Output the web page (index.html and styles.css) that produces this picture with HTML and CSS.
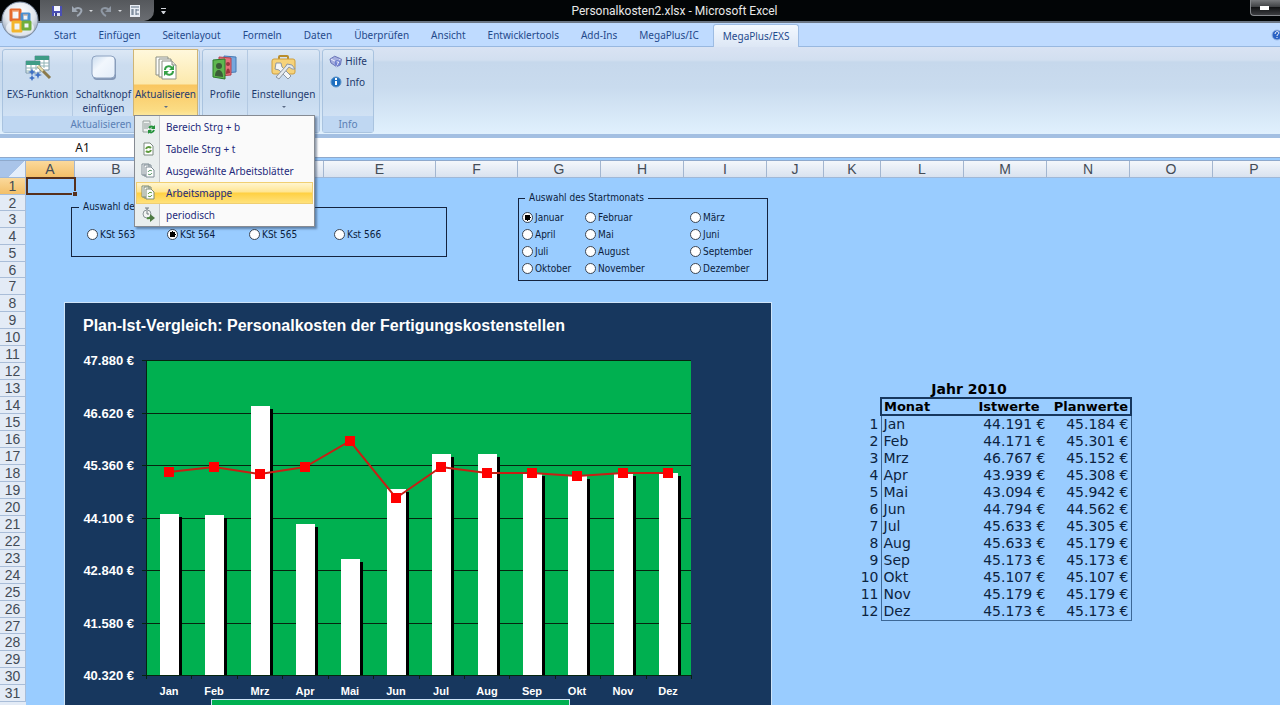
FILE: index.html
```
<!DOCTYPE html>
<html lang="de">
<head>
    <meta charset="UTF-8">
    <meta name="viewport" content="width=device-width, initial-scale=1.0">
    <title>Personalkosten2.xlsx - Microsoft Excel</title>
    <link rel="stylesheet" href="styles.css">
</head>
<body>
    <header class="title-bar">
        <button class="office-button" aria-label="Office">
            <svg width="40" height="40" viewBox="0 0 40 40">
                <defs>
                    <radialGradient id="orb" cx="50%" cy="30%" r="70%">
                        <stop offset="0" stop-color="#ffffff"/>
                        <stop offset="0.6" stop-color="#dfe5ec"/>
                        <stop offset="1" stop-color="#8e9cb0"/>
                    </radialGradient>
                </defs>
                <circle cx="20" cy="20" r="18" fill="url(#orb)" stroke="#7d8da3"/>
                <ellipse cx="20" cy="28" rx="14" ry="8" fill="#f6fafd" opacity="0.7"/>
                <g fill="none" stroke-width="3" stroke-linejoin="round">
                    <rect x="11" y="10" width="9" height="10" stroke="#e5692c"/>
                    <rect x="22" y="14" width="7" height="7" stroke="#4a8fd0"/>
                    <rect x="13" y="22" width="8" height="9" stroke="#f3b52d"/>
                    <rect x="23" y="22" width="7" height="7" stroke="#6fae3c"/>
                </g>
                <path d="M12 11h7M23 15h5" stroke="#f6b98f" stroke-width="1"/>
            </svg>
        </button>
        <div class="quick-access">
            <button aria-label="Speichern">
                <svg width="12" height="12" viewBox="0 0 12 12"><path d="M1 1h10v10H1z" fill="#4a4fb4"/><path d="M3 1h6v5H3z" fill="#f4f5ff"/><path d="M3 8h6v3H3z" fill="#dfe3f5"/><path d="M4 8h2v3H4z" fill="#3b3f8f"/></svg>
            </button>
            <button aria-label="Rückgängig">
                <svg width="12" height="12" viewBox="0 0 12 12"><path d="M3 5c4-4 9-1 7 2-1 2-2 3-4 4" fill="none" stroke="#9fa8b4" stroke-width="2"/><path d="M1 1v6h6z" fill="#9fa8b4"/></svg>
            </button>
            <span class="arrow"></span>
            <button aria-label="Wiederholen">
                <svg width="12" height="12" viewBox="0 0 12 12"><path d="M9 5C5 1 0 4 2 7c1 2 2 3 4 4" fill="none" stroke="#8f98a4" stroke-width="2"/><path d="M11 1v6H5z" fill="#8f98a4"/></svg>
            </button>
            <span class="arrow"></span>
            <button aria-label="Formular">
                <svg width="12" height="12" viewBox="0 0 12 12"><path d="M1 0h10v12H1z" fill="#e8edf4"/><path d="M2 2h8M3 4v6M3 5h2M3 7h2M3 9h2M7 4v6M7 5h3M7 9h3" stroke="#5f7184" fill="none"/></svg>
            </button>
        </div>
        <svg class="customize" width="7" height="7" viewBox="0 0 7 7"><path d="M1 0h5v1H1zM1 3h5L4 6H3z" fill="#cfd3d8"/></svg>
        <h1>Personalkosten2.xlsx - Microsoft Excel</h1>
        <button class="minimize" aria-label="Minimieren"></button>
    </header>

    <nav class="tabs">
        <a href="#">Start</a>
        <a href="#">Einfügen</a>
        <a href="#">Seitenlayout</a>
        <a href="#">Formeln</a>
        <a href="#">Daten</a>
        <a href="#">Überprüfen</a>
        <a href="#">Ansicht</a>
        <a href="#">Entwicklertools</a>
        <a href="#">Add-Ins</a>
        <a href="#">MegaPlus/IC</a>
        <a href="#" class="active">MegaPlus/EXS</a>
        <button class="help" aria-label="Hilfe">
            <svg width="12" height="12" viewBox="0 0 12 12"><circle cx="6" cy="6" r="5" fill="#2b62c4" stroke="#9db9e6"/><path d="M4 5c0-3 4-3 4-1 0 1-2 1-2 3M6 8v1" stroke="#fff" fill="none"/></svg>
        </button>
    </nav>

    <section class="ribbon">
        <div class="group group-update">
            <div class="group-body">
                <button class="big">
                    <svg width="28" height="28" viewBox="0 0 28 28">
                        <path d="M11 2h14v14H11z" fill="#fff" stroke="#7b98a8"/><path d="M11 2h14v4H11z" fill="#3f9c86"/>
                        <path d="M2 7h14v12H2z" fill="#fff" stroke="#7b98a8"/><path d="M2 7h14v4H2z" fill="#3f9c86"/>
                        <path d="M2 14h14M2 17h9M7 11v8M12 11v5M16 9h9M16 12h9M20 6v8" stroke="#8fb3b5" fill="none"/>
                        <path d="M14 12l12 12" stroke="#8b7a4c" stroke-width="3"/><path d="M14 12l5 5" stroke="#e8e0b0" stroke-width="2"/>
                        <path d="M8 14l1 3 3 1-3 1-1 3-1-3-3-1 3-1zM14 17l1 3 3 1-3 1-1 3-1-3-3-1 3-1zM8 21l1 2 2 1-2 1-1 2-1-2-2-1 2-1z" fill="#3e6fc4"/>
                    </svg>
                    <span>EXS-Funktion</span>
                </button>
                <button class="big">
                    <svg width="28" height="28" viewBox="0 0 28 28">
                        <defs><linearGradient id="knob" x2="1" y2="1"><stop offset="0" stop-color="#c9dbef"/><stop offset="0.4" stop-color="#f2f7fd"/><stop offset="1" stop-color="#e3edf9"/></linearGradient></defs>
                        <rect x="3" y="3" width="23" height="23" rx="4" fill="#8296b5"/>
                        <rect x="2" y="2" width="23" height="22" rx="4" fill="url(#knob)" stroke="#8ea3c1"/>
                    </svg>
                    <span>Schaltknopf einfügen</span>
                </button>
                <button class="big open" aria-haspopup="true" aria-expanded="true">
                    <svg width="28" height="28" viewBox="0 0 28 28">
                        <path d="M4 3h12v18H4z" fill="#fdfdfb" stroke="#8b8f84"/>
                        <path d="M7 5h12v18H7z" fill="#fdfdfb" stroke="#8b8f84"/>
                        <path d="M10 7h10l4 4v14H10z" fill="#fff" stroke="#8b8f84"/><path d="M20 7v4h4" fill="#e6e6e0" stroke="#8b8f84"/>
                        <path d="M13 16c0-4 5-5 7-2M21 17c0 4-5 5-7 2" fill="none" stroke="#35a046" stroke-width="2"/>
                        <path d="M22 11v5h-5zM12 22v-5h5z" fill="#35a046"/>
                    </svg>
                    <span>Aktualisieren</span>
                    <i class="caret"></i>
                </button>
            </div>
            <div class="group-label">Aktualisieren</div>
            <ul class="menu">
                <li><button>
                    <svg width="16" height="16" viewBox="0 0 16 16"><path d="M3 2h7v11H3z" fill="#eef1f0" stroke="#95a09c"/><path d="M4 5h5M4 7h5M4 9h4" stroke="#8d9a98"/><path d="M9 9c1-2 4-2 5 0M14 11c-1 3-4 3-5 1" fill="none" stroke="#23923b" stroke-width="2"/><path d="M15 6v4h-4zM8 15v-4h4z" fill="#23923b"/></svg>
                    <span>Bereich Strg + b</span></button></li>
                <li><button>
                    <svg width="16" height="16" viewBox="0 0 16 16"><path d="M4 2h6l3 3v9H4z" fill="#fff" stroke="#7c8b80"/><path d="M6 8c1-3 4-2 5-1M11 9c-1 3-4 2-5 1" fill="none" stroke="#5d9a3c" stroke-width="2"/></svg>
                    <span>Tabelle Strg + t</span></button></li>
                <li><button>
                    <svg width="16" height="16" viewBox="0 0 16 16"><path d="M2 1h7v11H2zM4 2h7v11H4z" fill="#fff" stroke="#7e8c94"/><path d="M6 4h5l3 3v7H6z" fill="#fff" stroke="#7e8c94"/><path d="M8 9c1-2 3-2 4-1M12 10c-1 2-3 2-4 1" fill="none" stroke="#5d9a6c" stroke-width="1"/></svg>
                    <span>Ausgewählte Arbeitsblätter</span></button></li>
                <li><button class="selected">
                    <svg width="16" height="16" viewBox="0 0 16 16"><path d="M2 1h7v11H2zM4 2h7v11H4z" fill="#fff" stroke="#7e8c74"/><path d="M6 4h5l3 3v7H6z" fill="#fff" stroke="#7e8c74"/><path d="M8 9c1-2 3-2 4-1M12 10c-1 2-3 2-4 1" fill="none" stroke="#5d9a3c" stroke-width="1"/></svg>
                    <span>Arbeitsmappe</span></button></li>
                <li><button>
                    <svg width="16" height="16" viewBox="0 0 16 16"><circle cx="7" cy="7" r="4" fill="#f2f4f3" stroke="#8b9598"/><path d="M7 4v3h2M5 1h4M7 1v2" stroke="#727d80" fill="none"/><path d="M7 11c2 1 3 0 4-1" fill="none" stroke="#4c8a3c" stroke-width="2"/><path d="M10 7l5 4-5 4z" fill="#4e7a43"/></svg>
                    <span>periodisch</span></button></li>
            </ul>
        </div>
        <div class="group group-profile">
            <div class="group-body">
                <button class="big">
                    <svg width="28" height="28" viewBox="0 0 28 28">
                        <path d="M13 2l12 1v15l-12 1z" fill="#76a7dd" stroke="#4678b4"/>
                        <path d="M8 3l12 1v17l-12 1z" fill="#e8707a" stroke="#b5434f"/>
                        <path d="M2 6l12-1v20l-12-2z" fill="#5fb84f" stroke="#2d7a2d"/>
                        <circle cx="8" cy="12" r="3" fill="#3c5c38"/><path d="M4 22c0-8 8-8 8 1z" fill="#3c5c38"/>
                        <circle cx="17" cy="10" r="2" fill="#9c3640"/><path d="M15 20c0-7 4-7 4-1z" fill="#9c3640"/>
                    </svg>
                    <span>Profile</span>
                </button>
                <button class="big">
                    <svg width="28" height="28" viewBox="0 0 28 28">
                        <path d="M9 6V3q0-1 1-1h7q1 0 1 1v3" fill="none" stroke="#b98d2d" stroke-width="2"/>
                        <rect x="2" y="5" width="23" height="15" rx="2" fill="#f6d27a" stroke="#cf9f3c"/>
                        <path d="M6 9l5 0 1 4 9 9-3 3-9-9-4-1z" fill="#f4f6f8" stroke="#8d97a3"/>
                        <path d="M17 10l5 1 3 4-3 0-3-2-10 12-3-2 10-11z" fill="#e4e9ee" stroke="#8d97a3"/>
                    </svg>
                    <span>Einstellungen</span>
                    <i class="caret"></i>
                </button>
            </div>
            <div class="group-label"></div>
        </div>
        <div class="group group-info">
            <div class="group-body small-buttons">
                <button>
                    <svg width="14" height="14" viewBox="0 0 14 14"><path d="M1 5l5-3 7 3-1 6-4 2-6-4z" fill="#a5aede" stroke="#6670b4"/><path d="M2 5l6 3 4-3M8 8v5" stroke="#eef0ff" fill="none"/><circle cx="9" cy="9" r="3" fill="#6e7fd0"/><path d="M8 8h2v1L9 10v1" stroke="#fff" fill="none"/></svg>
                    Hilfe
                </button>
                <button>
                    <svg width="14" height="14" viewBox="0 0 14 14"><circle cx="7" cy="7" r="5" fill="#1d6fc0" stroke="#5c93c9"/><path d="M7 3v2" stroke="#fff" stroke-width="2"/><path d="M7 6v4" stroke="#fff" stroke-width="2"/></svg>
                    Info
                </button>
            </div>
            <div class="group-label">Info</div>
        </div>
    </section>

    <div class="formula-bar">
        <input class="name-box" value="A1" aria-label="Namenfeld">
        <input class="formula" value="" aria-label="Bearbeitungsleiste">
    </div>

    <div class="columns" id="columns"></div>

    <main class="sheet">
        <div class="rows" id="rows"></div>
        <div class="cells">
            <div class="active-cell"></div>
            <div class="left">
                <div class="boxes">
                    <fieldset class="cost-centers">
                        <legend>Auswahl der Kostenstelle</legend>
                        <label><input type="radio" name="kst">KSt 563</label>
                        <label><input type="radio" name="kst" checked>KSt 564</label>
                        <label><input type="radio" name="kst">KSt 565</label>
                        <label><input type="radio" name="kst">Kst 566</label>
                    </fieldset>
                    <fieldset class="months">
                        <legend>Auswahl des Startmonats</legend>
                        <label><input type="radio" name="monat" checked>Januar</label>
                        <label><input type="radio" name="monat">Februar</label>
                        <label><input type="radio" name="monat">März</label>
                        <label><input type="radio" name="monat">April</label>
                        <label><input type="radio" name="monat">Mai</label>
                        <label><input type="radio" name="monat">Juni</label>
                        <label><input type="radio" name="monat">Juli</label>
                        <label><input type="radio" name="monat">August</label>
                        <label><input type="radio" name="monat">September</label>
                        <label><input type="radio" name="monat">Oktober</label>
                        <label><input type="radio" name="monat">November</label>
                        <label><input type="radio" name="monat">Dezember</label>
                    </fieldset>
                </div>
                <div class="chart">
                    <h2>Plan-Ist-Vergleich: Personalkosten der Fertigungskostenstellen</h2>
                    <svg id="chart" width="700" height="364" viewBox="0 0 700 364"></svg>
                    <div class="legend"></div>
                </div>
            </div>
            <table class="values">
                <caption>Jahr 2010</caption>
                <thead>
                    <tr><td></td><th>Monat</th><th>Istwerte</th><th>Planwerte</th></tr>
                </thead>
                <tbody id="values"></tbody>
            </table>
        </div>
    </main>

    <script src="script.js"></script>
</body>
</html>
```
FILE: styles.css
```
body {
    font-family: "Noto Sans", sans-serif;
    font-size: 10px;
    margin: 0;
    height: 100vh;
    overflow: hidden;
    display: flex;
    flex-direction: column;
    color: #1e3a6e;
    background: #99ccff;
}

button {
    font: inherit;
    color: inherit;
    background: none;
    border: none;
    padding: 0;
}

svg {
    display: block;
}

/* Title bar */
.title-bar {
    position: relative;
    display: flex;
    flex: none;
    height: 21px;
    background: #020506;
    border-bottom: 2px solid #6b7684;
}

.office-button {
    position: absolute;
    left: 0;
    top: 0;
    z-index: 2;
}

.quick-access {
    display: flex;
    align-items: center;
    gap: 8px;
    box-sizing: border-box;
    width: 114px;
    margin-left: 40px;
    padding-left: 11px;
    background: linear-gradient(#55585c, #6a6d72);
    border-radius: 0 0 10px 0;
}

.quick-access .arrow {
    border: 2px solid transparent;
    border-top-color: #d5d8dc;
    margin: 2px -1px 0 -2px;
}

.customize {
    margin: 8px 0 0 6px;
}

.title-bar h1 {
    flex: 1;
    margin: 0;
    padding-right: 68px;
    font: 12px/22px Roboto, sans-serif;
    text-align: center;
    color: #e8e8e8;
}

.minimize {
    position: relative;
    width: 30px;
    height: 16px;
    border: 1px solid #85888c;
    border-top: none;
    border-right: none;
    border-radius: 0 0 0 4px;
    background: linear-gradient(#77797c, #3a3c3f 50%, #121315 50%, #3c3e41);
}

.minimize::after {
    content: "";
    position: absolute;
    left: 9px;
    top: 6px;
    width: 9px;
    height: 4px;
    background: #fff;
}

/* Ribbon tabs */
.tabs {
    display: flex;
    flex: none;
    height: 23px;
    padding-left: 43px;
    background: #bfdbff;
    border-bottom: 1px solid #98b8e0;
}

.tabs a {
    padding: 0 11px;
    line-height: 25px;
    color: #1f4a8c;
    text-decoration: none;
}

.tabs a.active {
    margin: 1px 0 -1px 3px;
    padding: 0 9px;
    line-height: 23px;
    background: linear-gradient(#f2f8ff, #dde7f5);
    border: 1px solid #9dbce3;
    border-bottom: none;
    border-radius: 3px 3px 0 0;
    box-sizing: border-box;
}

.help {
    margin-left: auto;
    margin-right: -3px;
}

/* Ribbon */
.ribbon {
    display: flex;
    flex: none;
    gap: 2px;
    box-sizing: border-box;
    height: 91px;
    padding: 2px 0 4px 2px;
    background: linear-gradient(#d9e3f3, #d2dff0 13px, #c6d8ec 15px, #c9dbee 40px, #e0f0fd 86px);
    border-bottom: 4px solid #a3bfe2;
}

.group {
    position: relative;
    display: flex;
    flex-direction: column;
    box-sizing: border-box;
    height: 84px;
    border: 1px solid #a9c3df;
    border-radius: 3px;
    background: linear-gradient(#dce8f6, #cbdcef 15px, #c8dbef 50px, #d8e8f9);
}

.group-update {
    width: 198px;
}

.group-profile {
    width: 118px;
}

.group-info {
    width: 52px;
}

.group-body {
    display: flex;
    flex: 1;
}

.group-label {
    flex: none;
    height: 16px;
    line-height: 17px;
    text-align: center;
    color: #5a7fb5;
    background: #bfd7f2;
}

.big {
    display: flex;
    flex-direction: column;
    align-items: center;
    box-sizing: border-box;
    padding-top: 4px;
    line-height: 14px;
}

.big span {
    margin-top: 5px;
}

.group-update .big:nth-child(1) {
    width: 70px;
    border-right: 1px solid #b3c9e2;
}

.group-update .big:nth-child(2) {
    width: 61px;
}

.group-update .big.open {
    width: 63px;
    background: linear-gradient(#fff8dc, #fce9ac 34px, #f9c660 35px, #fbdc84 60px, #fdeaa0);
    outline: 1px solid #cfb576;
}

.group-profile .big:nth-child(1) {
    width: 45px;
    border-right: 1px solid #b3c9e2;
}

.group-profile .big:nth-child(2) {
    flex: 1;
}

.caret {
    margin-top: 5px;
    border: 2px solid transparent;
    border-top-color: #5a6b85;
}

.small-buttons {
    flex-direction: column;
    padding: 0 6px;
}

.small-buttons button {
    display: flex;
    align-items: center;
    gap: 3px;
    height: 21px;
}

/* Drop-down menu */
.menu {
    position: absolute;
    left: 131px;
    top: 65px;
    z-index: 5;
    box-sizing: border-box;
    width: 181px;
    margin: 0;
    padding: 0 1px;
    list-style: none;
    background: linear-gradient(90deg, #e9eeee 24px, #c5c8cc 24px, #c5c8cc 25px, #fafafa 25px);
    border: 1px solid #868b93;
    box-shadow: 2px 2px 2px rgba(40, 60, 90, 0.5);
}

.menu button {
    display: flex;
    align-items: center;
    gap: 10px;
    box-sizing: border-box;
    width: 100%;
    height: 22px;
    padding-left: 3px;
    border: 1px solid transparent;
    white-space: nowrap;
    color: #1e2a7a;
}

.menu button.selected {
    background: linear-gradient(#fff5cf, #ffe591 45%, #ffd042 50%, #ffe27c);
    border-color: #f0cf72;
}

/* Formula bar */
.formula-bar {
    display: flex;
    flex: none;
    height: 19px;
    background: #fff;
    border-bottom: 1px solid #8fa9cc;
}

.formula-bar input {
    border: none;
    padding: 0;
    outline: none;
    background: none;
    font: 12px "Noto Sans", sans-serif;
    color: #111;
}

.name-box {
    width: 165px;
    text-align: center;
}

.formula {
    flex: 1;
}

/* Column and row headings */
.columns {
    display: grid;
    grid-template-columns: 26px 49px repeat(3, 83px) 112px 82px repeat(3, 83px) 57px 57px repeat(3, 83px) 83px 83px;
    flex: none;
    height: 16px;
    margin-top: 2px;
    overflow: hidden;
    font: 14px/16px "Liberation Sans", sans-serif;
    text-align: center;
    color: #444c56;
    background: linear-gradient(#f4f7fb, #d9e2ef);
    border-top: 1px solid #8fa9cc;
    border-bottom: 1px solid #9fb8d8;
}

.columns div {
    border-right: 1px solid #a3b6d0;
}

.columns .corner {
    background: linear-gradient(135deg, #a9c4e9 60%, #e4eefb 60%);
}

.columns .current,
.rows .current {
    background: linear-gradient(#fbd99b, #f3bf68);
}

.sheet {
    display: flex;
    flex: 1;
    min-height: 0;
}

.rows {
    display: grid;
    grid-template-rows: 17px 16px repeat(3, 17px) 16px repeat(20, 17px) 16px repeat(4, 17px);
    align-content: start;
    flex: none;
    width: 26px;
    font: 14px/17px "Liberation Sans", sans-serif;
    text-align: center;
    color: #444c56;
    background: #e3ebf6;
}

.rows div {
    box-sizing: border-box;
    border-bottom: 1px solid #a9bdd8;
    border-right: 1px solid #a9bdd8;
}

.cells {
    position: relative;
    display: flex;
    align-items: flex-start;
    flex: 1;
}

.active-cell {
    position: absolute;
    left: 0;
    top: -1px;
    width: 46px;
    height: 14px;
    border: 2px solid #57301c;
}

.active-cell::after {
    content: "";
    position: absolute;
    right: -3px;
    bottom: -3px;
    width: 4px;
    height: 4px;
    background: #57301c;
    outline: 1px solid #99ccff;
}

.left {
    width: 708px;
    margin-left: 38px;
}

/* Option boxes */
.boxes {
    display: flex;
    justify-content: space-between;
    height: 124px;
    padding: 0 4px 0 7px;
    font: 10px "DejaVu Sans Condensed", "DejaVu Sans", sans-serif;
    color: #0c1c3c;
}

fieldset {
    display: grid;
    align-content: start;
    box-sizing: border-box;
    margin: 0;
    border: 1px solid #14233f;
}

legend {
    padding: 0 4px;
    line-height: 14px;
}

label {
    display: flex;
    align-items: center;
    gap: 2px;
    height: 17px;
}

input[type="radio"] {
    appearance: none;
    box-sizing: border-box;
    width: 11px;
    height: 11px;
    margin: 0;
    border: 1px solid #3c4654;
    border-radius: 50%;
    background: #fff;
}

input[type="radio"]:checked {
    background: radial-gradient(circle, #000 3px, #fff 3px);
}

.cost-centers {
    grid-template-columns: 80px 82px 85px 80px;
    width: 376px;
    height: 57px;
    margin-top: 22px;
    padding: 12px 0 0 15px;
}

.cost-centers legend {
    margin-left: -8px;
}

.months {
    grid-template-columns: 63px 105px 70px;
    width: 250px;
    height: 90px;
    margin-top: 13px;
    padding: 4px 0 0 3px;
}

.months legend {
    margin-left: 3px;
}

/* Chart */
.chart {
    box-sizing: border-box;
    border: 1px solid #cfe4f8;
    border-bottom: none;
    background: #17375e;
    font-family: "Liberation Sans", sans-serif;
    font-weight: bold;
    color: #fff;
}

.chart h2 {
    margin: 0;
    padding: 14px 0 0 18px;
    font-size: 16px;
    line-height: 18px;
}

.chart text {
    fill: #fff;
}

.chart .axis-y {
    font-size: 13px;
    text-anchor: end;
}

.chart .axis-x {
    font-size: 11px;
    text-anchor: middle;
}

.legend {
    width: 357px;
    height: 24px;
    margin-left: 146px;
    background: #00b050;
    border: 1px solid #cfe4f8;
}

/* Data table */
.values {
    margin: 203px 0 0 84px;
    border-collapse: collapse;
    font: 14px/17px "DejaVu Sans", sans-serif;
    color: #0c2340;
}

.values caption {
    padding-right: 50px;
    font-weight: bold;
    line-height: 16px;
    color: #000;
}

.values th,
.values td {
    padding: 0 2px;
    text-align: right;
}

.values th {
    font-size: 13px;
    line-height: 15px;
    color: #000;
    border: solid #17375e;
    border-width: 2px 0;
}

.values th:nth-child(2) {
    text-align: left;
    border-left-width: 2px;
}

.values th:nth-child(3) {
    padding-right: 8px;
}

.values th:last-child {
    border-right-width: 2px;
}

.values tbody td {
    height: 17px;
}

.values td:first-child {
    width: 20px;
}

.values td:nth-child(2) {
    width: 79px;
    text-align: left;
    border-left: 1px solid #3c6796;
}

.values td:nth-child(3) {
    width: 79px;
}

.values td:nth-child(4) {
    width: 79px;
    border-right: 1px solid #3c6796;
}

.values tr:last-child td:not(:first-child) {
    border-bottom: 1px solid #3c6796;
}

.values thead td {
    border: none;
    line-height: 15px;
}
```
FILE: script.js
```
const data = [
    ["Jan", 44191, 45184],
    ["Feb", 44171, 45301],
    ["Mrz", 46767, 45152],
    ["Apr", 43939, 45308],
    ["Mai", 43094, 45942],
    ["Jun", 44794, 44562],
    ["Jul", 45633, 45305],
    ["Aug", 45633, 45179],
    ["Sep", 45173, 45173],
    ["Okt", 45107, 45107],
    ["Nov", 45179, 45179],
    ["Dez", 45173, 45173]
];

function euro(n) {
    return String(n).replace(/(\d{3})$/, ".$1") + " €";
}

// Headings
let html = '<div class="corner"></div>';
"ABCDEFGHIJKLMNOP".split("").forEach(c => {
    html += `<div${c === "A" ? ' class="current"' : ""}>${c}</div>`;
});
document.getElementById("columns").innerHTML = html;

html = "";
for (let i = 1; i <= 31; i++) {
    html += `<div${i === 1 ? ' class="current"' : ""}>${i}</div>`;
}
document.getElementById("rows").innerHTML = html;

// Table
document.getElementById("values").innerHTML = data.map((d, i) =>
    `<tr><td>${i + 1}</td><td>${d[0]}</td><td>${euro(d[1])}</td><td>${euro(d[2])}</td></tr>`
).join("");

// Chart
const min = 40320, max = 47880, tick = 1260;
const left = 81, top0 = 25, width = 545, height = 315;
const step = width / data.length;
const y = v => Math.round(top0 + height - (v - min) / (max - min) * height);
const x = i => Math.round(left + step * (i + 0.5));

let svg = `<rect x="${left}" y="${top0}" width="${width}" height="${height}" fill="#00b050"/>`;
for (let v = min; v <= max; v += tick) {
    svg += `<rect x="${left - 4}" y="${y(v)}" width="${width + 4}" height="1" fill="#06240f"/>`;
    svg += `<text class="axis-y" x="69" y="${y(v) + 5}">${euro(v)}</text>`;
}
svg += `<rect x="${left}" y="${top0}" width="1" height="${height}" fill="#06240f"/>`;
data.forEach((d, i) => {
    const h = top0 + height - y(d[1]);
    svg += `<rect x="${x(i) - 6}" y="${y(d[1]) + 3}" width="19" height="${h - 3}" fill="#000"/>`;
    svg += `<rect x="${x(i) - 9}" y="${y(d[1])}" width="19" height="${h}" fill="#fff"/>`;
    svg += `<text class="axis-x" x="${x(i)}" y="360">${d[0]}</text>`;
});
for (let i = 0; i <= data.length; i++) {
    svg += `<rect x="${Math.round(left + step * i)}" y="${top0 + height}" width="1" height="4" fill="#06240f"/>`;
}
svg += `<polyline points="${data.map((d, i) => x(i) + "," + y(d[2])).join(" ")}" fill="none" stroke="#c81e14" stroke-width="2"/>`;
data.forEach((d, i) => {
    svg += `<rect x="${x(i) - 5}" y="${y(d[2]) - 5}" width="10" height="10" fill="#ff0000"/>`;
});
document.getElementById("chart").innerHTML = svg;
```
